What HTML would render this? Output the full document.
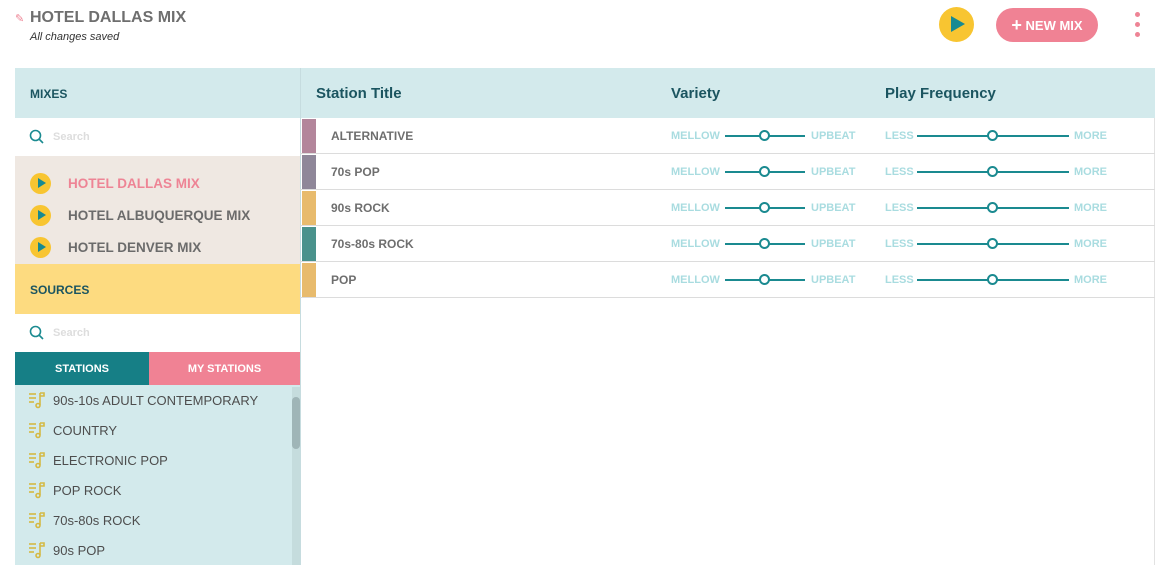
<!DOCTYPE html>
<html><head><style>
*{margin:0;padding:0;box-sizing:border-box}
body{width:1170px;height:565px;overflow:hidden;background:#fff;font-family:"Liberation Sans",sans-serif;position:relative}
.a{position:absolute}
.b{font-weight:bold}
.row{position:absolute;left:300px;width:855px;height:36px;border-bottom:1px solid #dcdcdc}
.sw{position:absolute;left:2px;top:1px;width:14px;height:34px}
.rt{position:absolute;left:31px;top:11px;font-size:12px;font-weight:bold;color:#6e6e6e}
.lab{position:absolute;top:12px;font-size:11px;font-weight:bold;color:#a9dce0}
.ln{position:absolute;top:17px;height:2px;background:#1a8a90}
.kn{position:absolute;top:12px;width:11px;height:11px;border:2px solid #1a8a90;border-radius:50%;background:#fff}
.mix{position:absolute;left:30px;font-size:13.5px;font-weight:bold;color:#6b6b6b}
.pl{position:absolute;left:30px;width:21px;height:21px;border-radius:50%;background:#f8c531}
.pl:after{content:"";position:absolute;left:8px;top:5px;border-left:8px solid #178a92;border-top:5.5px solid transparent;border-bottom:5.5px solid transparent}
</style></head><body>
<div class="a" style="left:15px;top:12px;color:#ee8495;font-size:11px">&#9998;</div>
<div class="a b" style="left:30px;top:9px;font-size:16px;color:#6e6e6e">HOTEL DALLAS MIX</div>
<div class="a" style="left:30px;top:31px;font-size:11px;font-style:italic;color:#333">All changes saved</div>
<div class="a" style="left:939px;top:7px;width:35px;height:35px;border-radius:50%;background:#f8c531"></div>
<div class="a" style="left:951px;top:16px;border-left:14px solid #178a92;border-top:8.5px solid transparent;border-bottom:8.5px solid transparent"></div>
<div class="a b" style="left:996px;top:8px;width:102px;height:34px;border-radius:17px;background:#f08294;color:#fff;font-size:13px;line-height:34px;text-align:center"><span style="font-size:18px;vertical-align:-1px">+</span> NEW MIX</div>
<div class="a" style="left:1135px;top:12px;width:5px;height:5px;border-radius:50%;background:#ee8495"></div>
<div class="a" style="left:1135px;top:22px;width:5px;height:5px;border-radius:50%;background:#ee8495"></div>
<div class="a" style="left:1135px;top:32px;width:5px;height:5px;border-radius:50%;background:#ee8495"></div>

<div class="a" style="left:15px;top:68px;width:1140px;height:50px;background:#d3eaec"></div>
<div class="a" style="left:300px;top:68px;width:1px;height:497px;background:#c6dcdf"></div>
<div class="a" style="left:1154px;top:118px;width:1px;height:447px;background:#e2e2e2"></div>
<div class="a b" style="left:30px;top:87px;font-size:12px;color:#1b5560">MIXES</div>
<div class="a b" style="left:316px;top:85px;font-size:15px;color:#1b5560">Station Title</div>
<div class="a b" style="left:671px;top:85px;font-size:15px;color:#1b5560">Variety</div>
<div class="a b" style="left:885px;top:85px;font-size:15px;color:#1b5560">Play Frequency</div>

<div class="row" style="top:118px"><div class="sw" style="background:#b3869b"></div><div class="rt">ALTERNATIVE</div><div class="lab" style="left:371px">MELLOW</div><div class="ln" style="left:425px;width:80px"></div><div class="kn" style="left:459px"></div><div class="lab" style="left:511px">UPBEAT</div><div class="lab" style="left:585px">LESS</div><div class="ln" style="left:617px;width:152px"></div><div class="kn" style="left:687px"></div><div class="lab" style="left:774px">MORE</div></div>
<div class="row" style="top:154px"><div class="sw" style="background:#8f8799"></div><div class="rt">70s POP</div><div class="lab" style="left:371px">MELLOW</div><div class="ln" style="left:425px;width:80px"></div><div class="kn" style="left:459px"></div><div class="lab" style="left:511px">UPBEAT</div><div class="lab" style="left:585px">LESS</div><div class="ln" style="left:617px;width:152px"></div><div class="kn" style="left:687px"></div><div class="lab" style="left:774px">MORE</div></div>
<div class="row" style="top:190px"><div class="sw" style="background:#e8bb6d"></div><div class="rt">90s ROCK</div><div class="lab" style="left:371px">MELLOW</div><div class="ln" style="left:425px;width:80px"></div><div class="kn" style="left:459px"></div><div class="lab" style="left:511px">UPBEAT</div><div class="lab" style="left:585px">LESS</div><div class="ln" style="left:617px;width:152px"></div><div class="kn" style="left:687px"></div><div class="lab" style="left:774px">MORE</div></div>
<div class="row" style="top:226px"><div class="sw" style="background:#4a928c"></div><div class="rt">70s-80s ROCK</div><div class="lab" style="left:371px">MELLOW</div><div class="ln" style="left:425px;width:80px"></div><div class="kn" style="left:459px"></div><div class="lab" style="left:511px">UPBEAT</div><div class="lab" style="left:585px">LESS</div><div class="ln" style="left:617px;width:152px"></div><div class="kn" style="left:687px"></div><div class="lab" style="left:774px">MORE</div></div>
<div class="row" style="top:262px"><div class="sw" style="background:#e8bb6d"></div><div class="rt">POP</div><div class="lab" style="left:371px">MELLOW</div><div class="ln" style="left:425px;width:80px"></div><div class="kn" style="left:459px"></div><div class="lab" style="left:511px">UPBEAT</div><div class="lab" style="left:585px">LESS</div><div class="ln" style="left:617px;width:152px"></div><div class="kn" style="left:687px"></div><div class="lab" style="left:774px">MORE</div></div>

<svg class="a" style="left:29px;top:129px" width="16" height="16"><circle cx="6.5" cy="6.5" r="5" fill="none" stroke="#1a8a90" stroke-width="1.6"/><line x1="10" y1="10" x2="14" y2="14" stroke="#1a8a90" stroke-width="1.6"/></svg>
<div class="a b" style="left:53px;top:131px;font-size:11px;color:#ddd">Search</div>

<div class="a" style="left:15px;top:156px;width:285px;height:108px;background:#efe8e2">
<div class="pl" style="left:15px;top:17px"></div><div class="mix" style="left:53px;top:20px;color:#ee8495">HOTEL DALLAS MIX</div>
<div class="pl" style="left:15px;top:49px"></div><div class="mix" style="left:53px;top:52px">HOTEL ALBUQUERQUE MIX</div>
<div class="pl" style="left:15px;top:81px"></div><div class="mix" style="left:53px;top:84px">HOTEL DENVER MIX</div>
</div>
<div class="a" style="left:15px;top:264px;width:285px;height:50px;background:#fddb80"></div>
<div class="a b" style="left:30px;top:283px;font-size:12px;color:#1b5560">SOURCES</div>
<svg class="a" style="left:29px;top:325px" width="16" height="16"><circle cx="6.5" cy="6.5" r="5" fill="none" stroke="#1a8a90" stroke-width="1.6"/><line x1="10" y1="10" x2="14" y2="14" stroke="#1a8a90" stroke-width="1.6"/></svg>
<div class="a b" style="left:53px;top:327px;font-size:11px;color:#ddd">Search</div>
<div class="a b" style="left:15px;top:352px;width:134px;height:33px;background:#167f86;color:#fff;font-size:11px;line-height:35px;text-align:center">STATIONS</div>
<div class="a b" style="left:149px;top:352px;width:151px;height:33px;background:#f08294;color:#fff;font-size:11px;line-height:35px;text-align:center">MY STATIONS</div>
<div class="a" style="left:15px;top:385px;width:285px;height:180px;background:#d3eaec">
<div class="a" style="left:277px;top:2px;width:8px;height:178px;background:#c5dcdd"></div>
<div class="a" style="left:277px;top:12px;width:8px;height:52px;border-radius:4px;background:#9fb5b7"></div>
</div>
<div id="list"></div>
<script>
var n=["90s-10s ADULT CONTEMPORARY","COUNTRY","ELECTRONIC POP","POP ROCK","70s-80s ROCK","90s POP"],h="";
n.forEach(function(t,i){var y=392+i*30;
h+='<svg class="a" style="left:29px;top:'+y+'px" width="18" height="17"><g stroke="#d4b944" stroke-width="1.6" fill="none"><line x1="0" y1="2" x2="7" y2="2"/><line x1="0" y1="6" x2="7" y2="6"/><line x1="0" y1="10" x2="5" y2="10"/><line x1="11" y1="1" x2="11" y2="13"/><path d="M11 1h4v3h-4"/><circle cx="9" cy="13.5" r="2"/></g></svg>';
h+='<div class="a" style="left:53px;top:'+(y+1)+'px;font-size:13px;color:#4d4d4d">'+t+'</div>';});
document.getElementById("list").innerHTML=h;
</script>
</body></html>
